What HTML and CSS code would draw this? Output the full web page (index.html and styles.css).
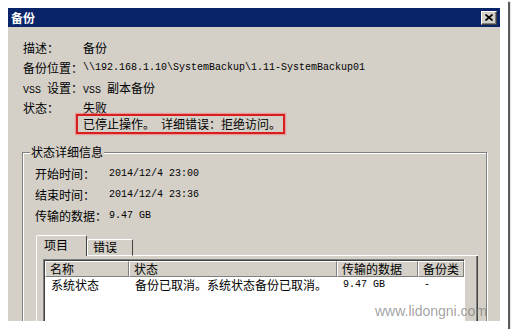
FILE: index.html
```html
<!DOCTYPE html>
<html lang="zh-CN">
<head>
<meta charset="utf-8">
<title>备份</title>
<link rel="stylesheet" href="styles.css">
</head>
<body>
<div class="frame">
  <div class="dialog">
    <div class="titlebar">
      <span class="title">备份</span>
      <span class="close"><svg width="8" height="7" viewBox="0 0 8 7"><path d="M0.5 0.5 L7.5 6.5 M7.5 0.5 L0.5 6.5" stroke="#000" stroke-width="1.7" fill="none"/></svg></span>
    </div>
    <div class="info">
      <div class="row"><span class="lbl">描述：</span><span>备份</span></div>
      <div class="row"><span class="lbl">备份位置：</span><span class="en">\\192.168.1.10\SystemBackup\1.11-SystemBackup01</span></div>
      <div class="row"><span class="lbl"><span class="en">VSS </span>设置：</span><span><span class="en">VSS </span>副本备份</span></div>
      <div class="row"><span class="lbl">状态：</span><span>失败</span></div>
      <div class="err">已停止操作。<span class="en"> </span>详细错误：拒绝访问。</div>
    </div>
    <fieldset class="group">
      <legend>状态详细信息</legend>
      <div class="grow"><span class="glbl">开始时间：</span><span class="en">2014/12/4 23:00</span></div>
      <div class="grow"><span class="glbl">结束时间：</span><span class="en">2014/12/4 23:36</span></div>
      <div class="grow"><span class="glbl">传输的数据：</span><span class="en">9.47 GB</span></div>
      <div class="tabs">
        <div class="tab sel">项目</div>
        <div class="tab">错误</div>
        <div class="fill"></div>
      </div>
      <div class="panel">
        <div class="list">
          <div class="lv">
            <div class="hd">名称</div>
            <div class="hd">状态</div>
            <div class="hd">传输的数据</div>
            <div class="hd">备份类</div>
            <div class="cell">系统状态</div>
            <div class="cell">备份已取消。系统状态备份已取消。</div>
            <div class="cell en">9.47 GB</div>
            <div class="cell en">-</div>
          </div>
        </div>
      </div>
    </fieldset>
  </div>
  <div class="wm">www.lidongni.com</div>
</div>
</body>
</html>
```

FILE: styles.css
```css
body {
  margin: 0;
  background: #fff;
  font-family: "Noto Sans CJK SC", sans-serif;
  font-size: 12px;
  color: #000;
}
.frame {
  position: relative;
  width: 508px;
  height: 329px;
  box-sizing: border-box;
  padding: 8px;
  background: #fff;
  box-shadow: 2px 2px 1px rgba(50, 50, 50, 0.8);
}
.dialog {
  width: 492px;
  height: 313px;
  background: #d4d0c8;
  overflow: hidden;
}
.titlebar {
  height: 19px;
  background: #0a246a;
  display: flex;
  align-items: center;
  justify-content: space-between;
  padding: 0 3px 0 3px;
}
.title {
  color: #fff;
  font-weight: bold;
  font-size: 12px;
  line-height: 19px;
}
.close {
  width: 16px;
  height: 14px;
  box-sizing: border-box;
  background: #d4d0c8;
  border: 1px solid;
  border-color: #fff #404040 #404040 #fff;
  box-shadow: inset -1px -1px 0 #808080;
  display: flex;
  align-items: center;
  justify-content: center;
}
.info {
  display: flex;
  flex-direction: column;
  align-items: flex-start;
  padding: 11px 0 0 15px;
}
.row {
  display: flex;
  height: 20px;
  line-height: 20px;
  white-space: nowrap;
}
.lbl {
  width: 60px;
  flex: none;
}
.en {
  font-family: "Liberation Mono", monospace;
  font-size: 10px;
}
.err {
  margin: -4px 0 0 53px;
  height: 20px;
  box-sizing: border-box;
  border: 2px solid #d81e1e;
  box-shadow: 0 0 1px 1px rgba(240, 120, 120, 0.6);
  padding: 0 2px 0 5px;
  line-height: 16px;
  white-space: nowrap;
}
.group {
  margin: 11px 13px 0 14px;
  padding: 4px 8px 0 12px;
  border: 1px solid #808080;
  box-shadow: inset 1px 1px 0 #fff, 1px 1px 0 #fff;
  height: 220px;
  min-width: 0;
}
.group legend {
  padding: 0 1px;
  margin-left: -5px;
  line-height: 14px;
  font-size: 12px;
  background: #d4d0c8;
}
.grow {
  display: flex;
  height: 21px;
  line-height: 21px;
  white-space: nowrap;
}
.glbl {
  width: 74px;
  flex: none;
}
.tabs {
  display: flex;
  align-items: flex-end;
  margin: 9px 0 0 1px;
}
.tab {
  height: 17px;
  width: 46px;
  box-sizing: border-box;
  border: 1px solid #fff;
  border-right-color: #404040;
  border-radius: 2px 2px 0 0;
  padding: 0 5px;
  line-height: 13px;
}
.tab.sel {
  height: 21px;
  width: 51px;
  border-bottom: none;
  padding: 0 7px;
  line-height: 18px;
}
.fill {
  flex: 1;
  border-bottom: 1px solid #fff;
}
.panel {
  margin-left: 1px;
  border-left: 1px solid #fff;
  border-right: 1px solid #404040;
  box-shadow: inset -1px 0 0 #808080;
  padding: 3px 12px 0 6px;
  height: 100px;
}
.list {
  background: #fff;
  border: 1px solid;
  border-color: #808080 #fff #fff #808080;
  box-shadow: inset 1px 1px 0 #404040;
  padding: 1px 0 0 1px;
  height: 90px;
  overflow: hidden;
}
.lv {
  display: grid;
  grid-template-columns: 84px 208px 81px 1fr;
}
.hd {
  background: #d4d0c8;
  height: 16px;
  box-sizing: border-box;
  border: 1px solid;
  border-color: #fff #808080 #808080 #fff;
  line-height: 14px;
  padding-left: 4px;
  white-space: nowrap;
  overflow: hidden;
}
.cell {
  height: 16px;
  line-height: 16px;
  padding-left: 6px;
  white-space: nowrap;
  overflow: hidden;
}
.wm {
  position: absolute;
  left: 375px;
  top: 303px;
  font-family: "Liberation Sans", sans-serif;
  font-size: 14px;
  color: rgba(110, 110, 110, 0.65);
}
```
